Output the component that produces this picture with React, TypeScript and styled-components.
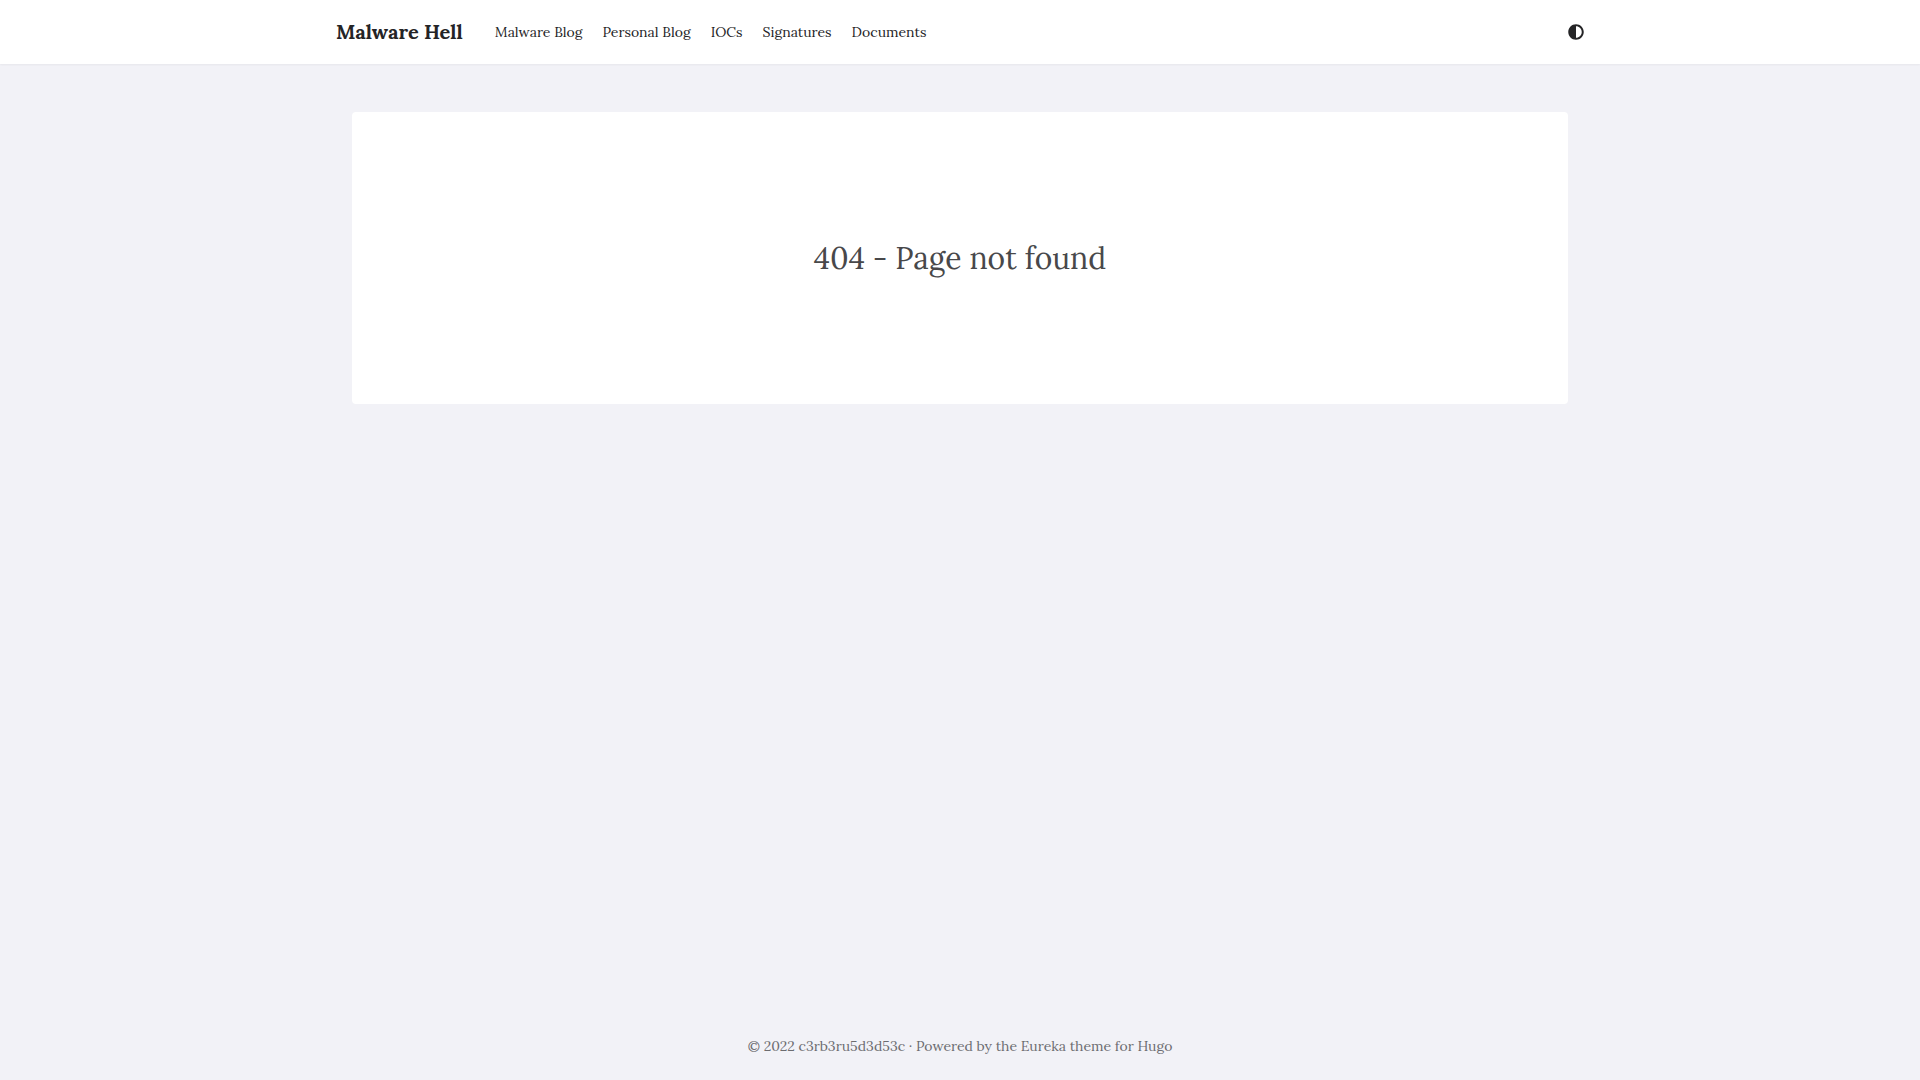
import React, { useState } from "react";
import styled, { createGlobalStyle } from "styled-components";
import { FaAdjust } from "react-icons/fa";

const GlobalStyle = createGlobalStyle<{ $dark: boolean }>`
  *, *::before, *::after { box-sizing: border-box; }
  body {
    margin: 0;
    color: ${(p) => (p.$dark ? "#e5e5ea" : "#242426")};
    background: ${(p) => (p.$dark ? "#1c1c1e" : "#f2f2f7")};
    font-family: Lora, "Liberation Serif", serif;
  }
`;

const Page = styled.div`
  display: flex;
  flex-direction: column;
  min-height: 100vh;
`;

const Header = styled.header<{ $dark: boolean }>`
  background: ${(p) => (p.$dark ? "#2c2c2e" : "#ffffff")};
  box-shadow: 0 1px 2px rgba(0, 0, 0, 0.05);
`;

const Bar = styled.div`
  display: flex;
  align-items: center;
  max-width: 1280px;
  height: 64px;
  margin: 0 auto;
  padding: 0 16px;
`;

const Brand = styled.a`
  margin-right: 32px;
  color: inherit;
  font-size: 20px;
  font-weight: 700;
  line-height: 28px;
  text-decoration: none;
`;

const Nav = styled.nav`
  display: flex;
  flex: 1;
  gap: 20px;
`;

const NavLink = styled.a`
  color: inherit;
  font-size: 14px;
  line-height: 20px;
  text-decoration: none;
`;

const ThemeButton = styled.button`
  display: flex;
  padding: 0;
  border: 0;
  color: inherit;
  background: none;
  font-size: 16px;
  cursor: pointer;
`;

const Main = styled.main`
  flex: 1;
  width: 100%;
  max-width: 1280px;
  margin: 0 auto;
  padding: 48px 32px;
`;

const Card = styled.section<{ $dark: boolean }>`
  padding: 128px 32px;
  border-radius: 4px;
  background: ${(p) => (p.$dark ? "#2c2c2e" : "#ffffff")};
  text-align: center;
`;

const Message = styled.h1<{ $dark: boolean }>`
  margin: 0;
  color: ${(p) => (p.$dark ? "#d1d1d6" : "#48484a")};
  font-size: 30px;
  font-weight: 400;
  line-height: 36px;
`;

const Footer = styled.footer`
  padding: 24px 16px;
  color: #6c6c70;
  font-size: 14px;
  line-height: 20px;
  text-align: center;
`;

const FooterText = styled.p`
  margin: 0;
`;

const FooterLink = styled.a`
  color: inherit;
  text-decoration: none;
`;

const sections = ["Malware Blog", "Personal Blog", "IOCs", "Signatures", "Documents"];

export default function App() {
  const [dark, setDark] = useState(false);
  return (
    <Page>
      <GlobalStyle $dark={dark} />
      <Header $dark={dark}>
        <Bar>
          <Brand href="#">Malware Hell</Brand>
          <Nav>
            {sections.map((name) => (
              <NavLink key={name} href="#">{name}</NavLink>
            ))}
          </Nav>
          <ThemeButton type="button" aria-label="Toggle theme" onClick={() => setDark(!dark)}>
            <FaAdjust />
          </ThemeButton>
        </Bar>
      </Header>
      <Main>
        <Card $dark={dark}>
          <Message $dark={dark}>404 - Page not found</Message>
        </Card>
      </Main>
      <Footer>
        <FooterText>
          © 2022 c3rb3ru5d3d53c · Powered by the <FooterLink href="#">Eureka</FooterLink> theme for{" "}
          <FooterLink href="#">Hugo</FooterLink>
        </FooterText>
      </Footer>
    </Page>
  );
}
